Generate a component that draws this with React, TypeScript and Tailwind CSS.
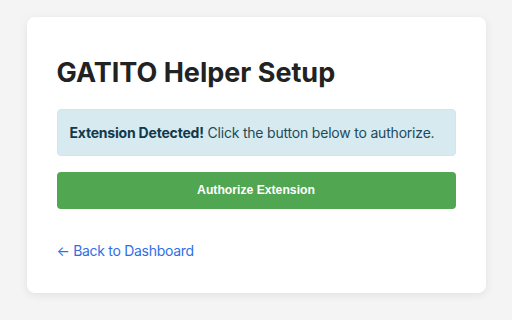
import React from 'react';

const App: React.FC = () => {
  return (
    <div className="min-h-screen bg-[#f4f4f4] pt-[17px] font-['Inter',sans-serif]">
      <div className="mx-auto w-[459px] h-[276px] rounded-lg bg-white px-[30px] pt-[30px] shadow-[0_2px_8px_rgba(0,0,0,0.08)]">
        {/* Heading */}
        <h1 className="mt-[10px] text-[27px] leading-[32px] font-bold text-[#222]">GATITO Helper Setup</h1>

        {/* Info alert */}
        <div className="mt-[20px] rounded-[4px] border border-[#cfe6ec] bg-[#d6eaf0] px-[12px] py-[14px] text-[14px] leading-[17px] tracking-[-0.2px] text-[#1e4a5a] whitespace-nowrap">
          <strong className="font-bold text-[#10394a]">Extension Detected!</strong> Click the button below to authorize.
        </div>

        {/* Action */}
        <button className="mt-[16px] w-full h-[37px] rounded-[4px] bg-[#51a651] text-[12.2px] font-bold text-white font-['Liberation_Sans',Arial,sans-serif]">
          Authorize Extension
        </button>

        {/* Back link */}
        <a href="#" className="mt-[33px] block text-[14px] leading-[18px] tracking-[-0.3px] text-[#2f6fe6]">
          ← Back to Dashboard
        </a>
      </div>
    </div>
  );
};

export default App;
